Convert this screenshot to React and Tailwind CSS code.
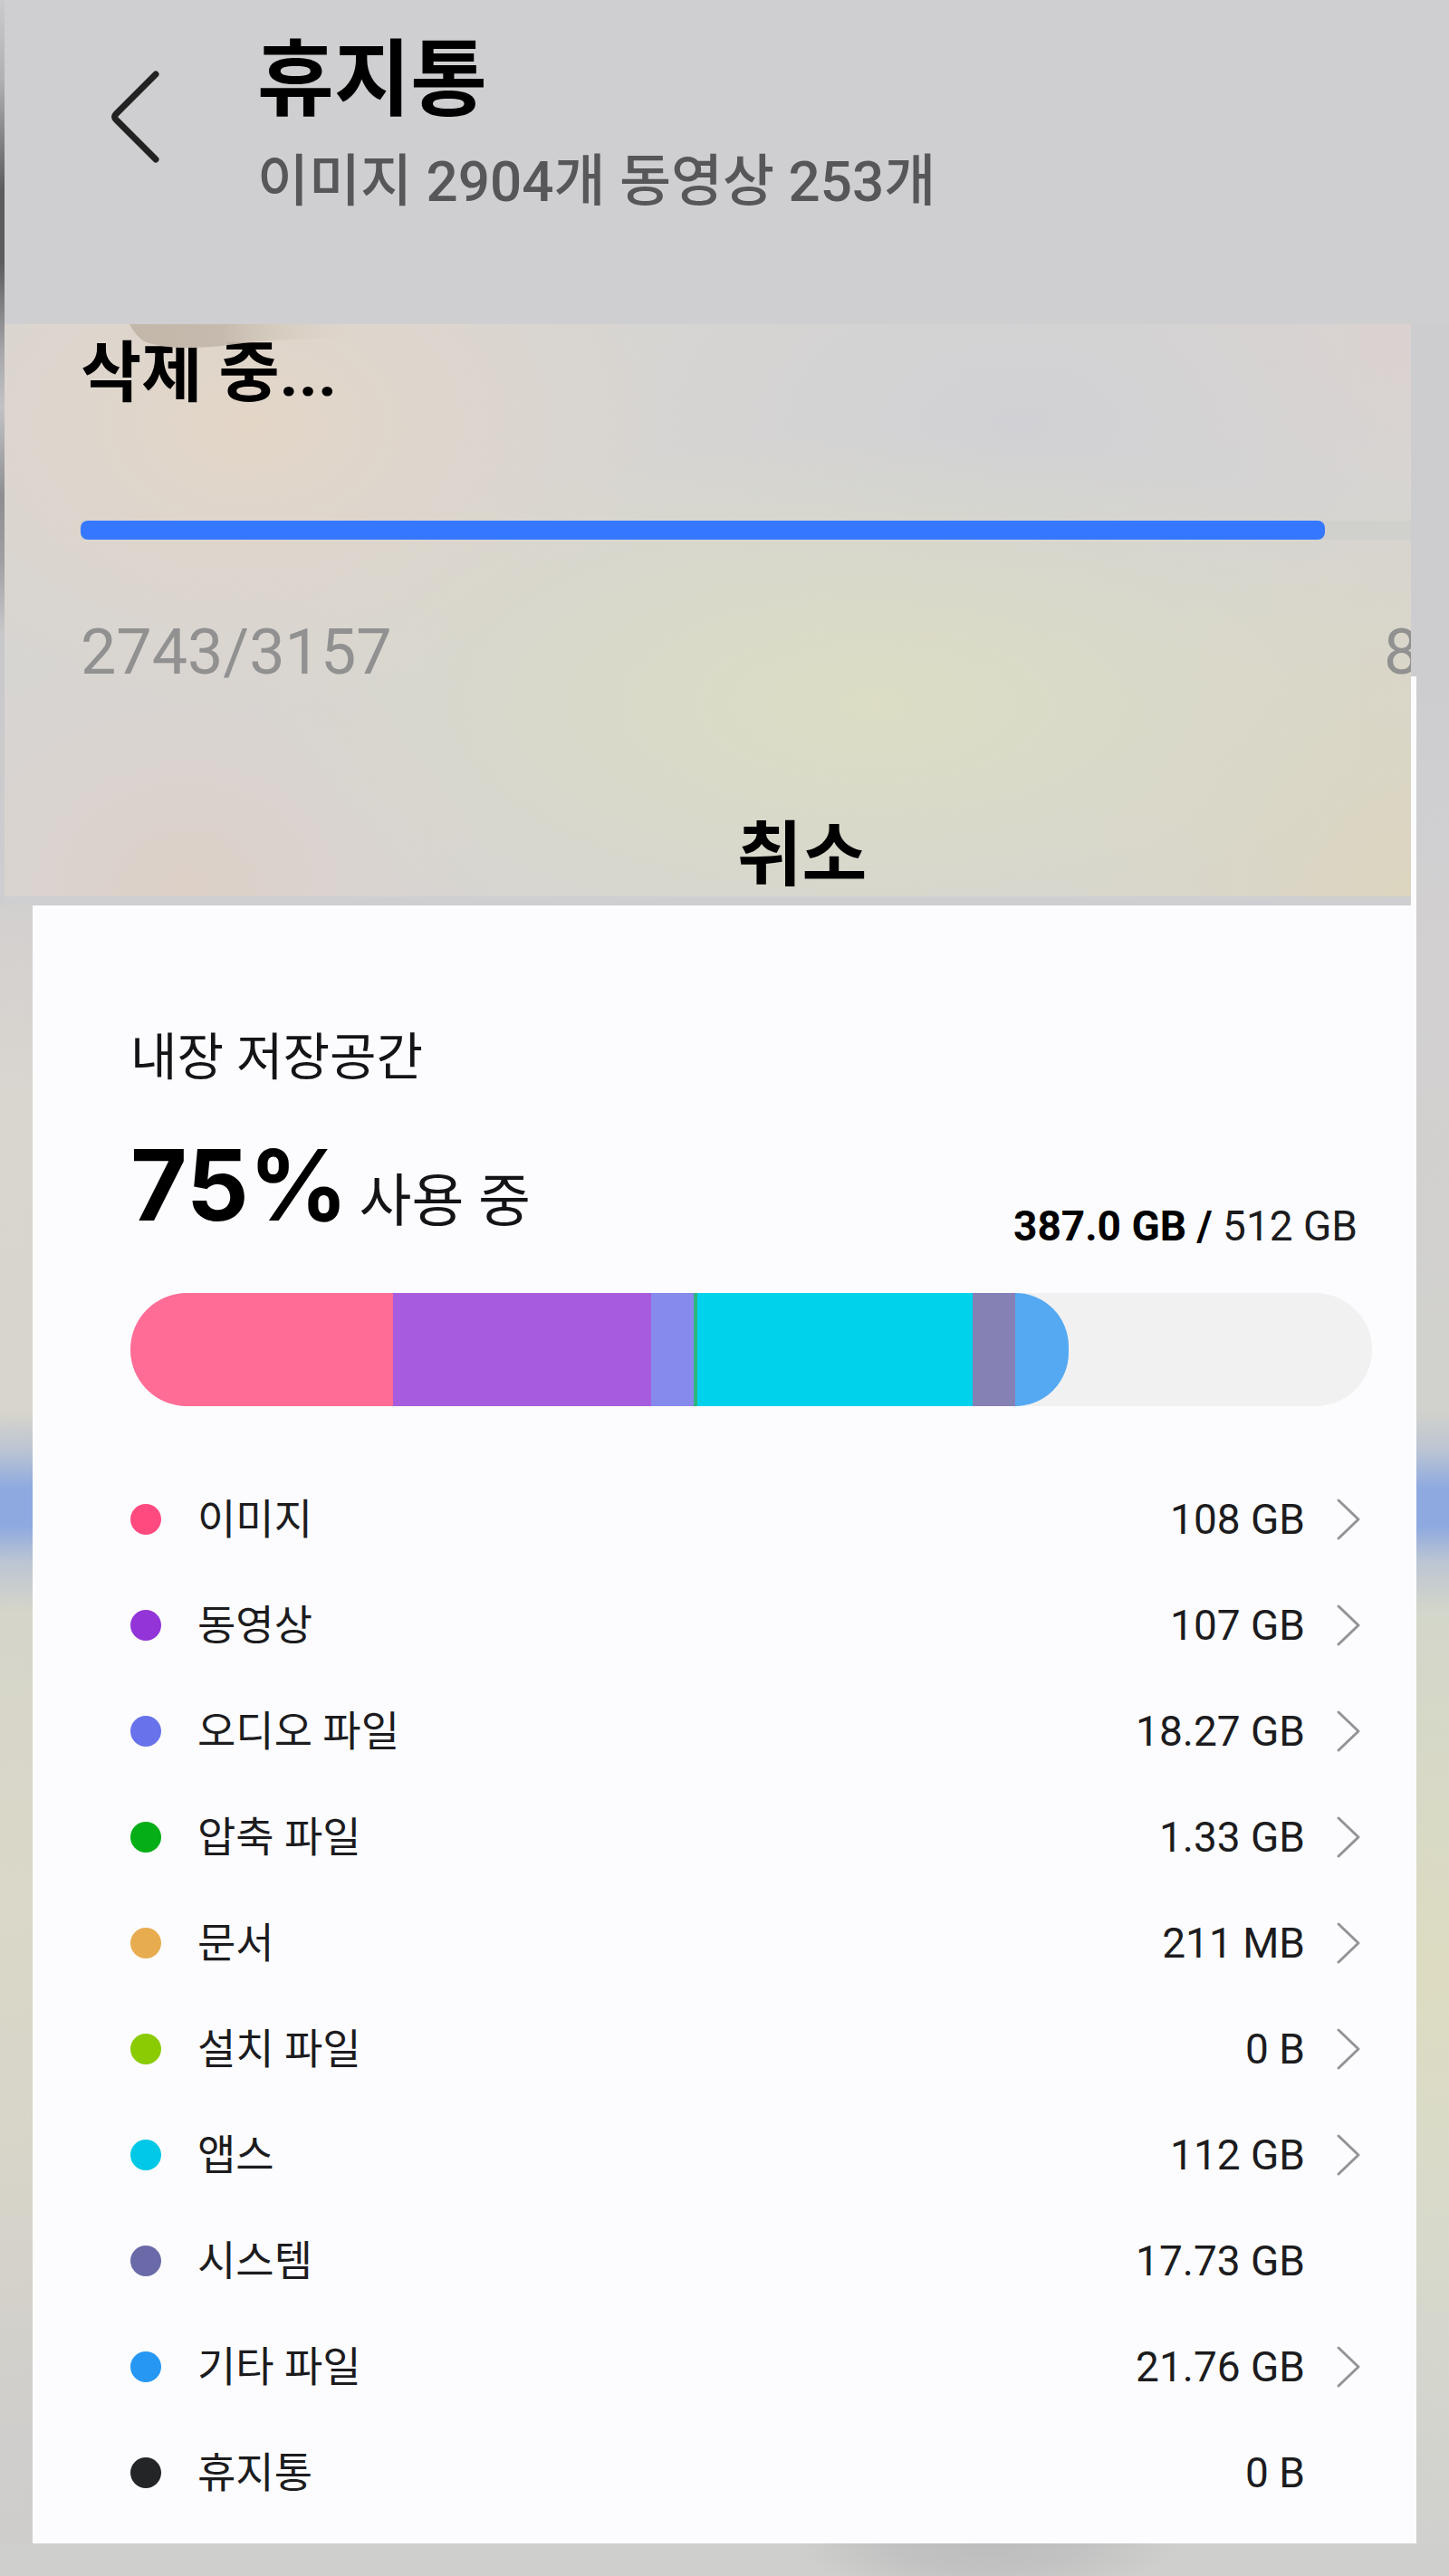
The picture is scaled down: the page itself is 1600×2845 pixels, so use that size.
import React from 'react';

const categories = [
  { name: '이미지', size: '108 GB', dot: 'bg-[#ff4a7f]', link: true },
  { name: '동영상', size: '107 GB', dot: 'bg-[#9234d8]', link: true },
  { name: '오디오 파일', size: '18.27 GB', dot: 'bg-[#6872ea]', link: true },
  { name: '압축 파일', size: '1.33 GB', dot: 'bg-[#05ae17]', link: true },
  { name: '문서', size: '211 MB', dot: 'bg-[#e8ac50]', link: true },
  { name: '설치 파일', size: '0 B', dot: 'bg-[#8acb04]', link: true },
  { name: '앱스', size: '112 GB', dot: 'bg-[#00c8e6]', link: true },
  { name: '시스템', size: '17.73 GB', dot: 'bg-[#6a6aa8]', link: false },
  { name: '기타 파일', size: '21.76 GB', dot: 'bg-[#2697f3]', link: true },
  { name: '휴지통', size: '0 B', dot: 'bg-[#242527]', link: false },
];

// share of the whole 512 GB track, in percent
const segments = [
  { id: 'images', share: 21.15, color: 'bg-[#ff6c96]' },
  { id: 'videos', share: 20.8, color: 'bg-[#a75cdf]' },
  { id: 'audio', share: 3.45, color: 'bg-[#868aed]' },
  { id: 'archives', share: 0.25, color: 'bg-[#2fb57e]' },
  { id: 'apps', share: 22.15, color: 'bg-[#00d2ec]' },
  { id: 'system', share: 3.45, color: 'bg-[#8581b5]' },
  { id: 'other', share: 4.3, color: 'bg-[#55a9f3]' },
];

const Header = () => (
  <header className="flex h-[358px] items-start bg-[#cfcfd1]">
    <button type="button" aria-label="뒤로" className="ml-[109px] mt-[73px] cursor-pointer">
      <svg className="h-28 w-[72px]" viewBox="0 0 72 112" fill="none" stroke="#222223" strokeWidth="7" strokeLinecap="round" strokeLinejoin="round">
        <path d="M58 9 L14 53 Q11 56 14 59 L58 103" />
      </svg>
    </button>
    <div className="ml-[98px] mt-[37px]">
      <h1 className="text-[92px] leading-[104px] font-bold text-black">휴지통</h1>
      <p className="mt-5 text-[62px] leading-[80px] font-medium text-[#57575a]">이미지 2904개 동영상 253개</p>
    </div>
  </header>
);

const DeleteDialog = () => (
  <section className="relative z-10 mr-[42px] border-b-10 border-[#cfcfd1]">
    <div className="relative h-[632px] overflow-hidden bg-[#d7d5d2] bg-[radial-gradient(ellipse_680px_300px_at_960px_420px,#dcddc4_0%,#dadbc6b0_45%,transparent_100%),radial-gradient(ellipse_460px_320px_at_270px_110px,#e3d6c7_0%,#e1d6cab0_40%,transparent_100%),radial-gradient(ellipse_340px_280px_at_200px_620px,#dcd0c7_0%,#dcd2cd99_50%,transparent_100%),radial-gradient(ellipse_440px_260px_at_1120px_110px,#d1d1d5_0%,transparent_100%),radial-gradient(ellipse_400px_460px_at_1553px_632px,#dcd5bf_0%,transparent_100%),radial-gradient(ellipse_300px_160px_at_1540px_30px,#dbd2d0_0%,transparent_100%)] pl-[84px]">
      <h2 className="pt-3 text-[73px] leading-[84px] font-bold text-black">삭제 중...</h2>
      <div className="mt-[121px] flex h-[21px] bg-[#d0d1cd]" role="progressbar" aria-label="삭제 중" aria-valuemin={0} aria-valuemax={3157} aria-valuenow={2743}>
        <div className="w-[93.5%] rounded-lg bg-[#3578ff]" />
      </div>
      <div className="mt-[82px] flex justify-between text-[70px] leading-[84px] text-[#919192]">
        <span>2743/3157</span>
        <span className="w-[30px] overflow-hidden">8</span>
      </div>
      <div className="mt-[134px] flex justify-center pl-[124px]">
        <button type="button" className="cursor-pointer text-[78px] leading-[100px] font-bold text-black">취소</button>
      </div>
      {/* edge of the card behind the sheet */}
      <svg className="absolute top-0 left-[130px] h-7 w-[260px]" viewBox="0 0 260 28" fill="none">
        <defs>
          <linearGradient id="shade" x1="0" x2="1" y1="0" y2="0">
            <stop offset="0" stopColor="#c2b7a9" />
            <stop offset="0.4" stopColor="#c5baad" />
            <stop offset="1" stopColor="#ddd2c4" stopOpacity="0" />
          </linearGradient>
        </defs>
        <path d="M8 0 H260 V12 Q230 17 190 17 Q160 17 110 24 Q50 30 24 19 Q14 12 8 0 Z" fill="url(#shade)" />
      </svg>
    </div>
  </section>
);

const UsageBar = () => (
  <div className="mt-9 flex h-[125px] w-full rounded-full bg-[#f1f1f1]">
    {segments.map((s) => (
      <div
        key={s.id}
        className={`${s.color} first:rounded-l-full last:rounded-r-full`}
        style={{ width: `${s.share}%` }}
      />
    ))}
  </div>
);

const CategoryRow = ({ item }) => (
  <li>
    <a href="#" className="flex h-[117px] items-center text-[46px] leading-[60px] text-[#1c1c1e]">
      <span className={`size-[34px] rounded-full ${item.dot}`} />
      <span className="ml-10 flex-1">{item.name}</span>
      <span>{item.size}</span>
      <span className="ml-[34px] flex w-10 justify-start">
        {item.link && (
          <svg className="h-12 w-[30px]" viewBox="0 0 30 48" fill="none" stroke="#949496" strokeWidth="3" strokeLinecap="round" strokeLinejoin="round">
            <path d="M3 3 L25 24 L3 45" />
          </svg>
        )}
      </span>
    </a>
  </li>
);

const StorageCard = () => (
  <main className="-mt-[253px] mr-9 ml-9 bg-[#fcfcfe] pt-[379px] pr-[49px] pb-5 pl-[108px]">
    <h2 className="text-[56px] leading-[84px] text-[#141416]">내장 저장공간</h2>
    <div className="mt-[34px] flex items-end justify-between pr-4">
      <p className="text-[63px] leading-[130px] text-[#141416]">
        <span className="mr-3 font-['Inter','Noto_Sans_CJK_KR',sans-serif] text-[108px] font-bold text-black">75%</span>
        사용 중
      </p>
      <p className="pb-2 text-[46px] leading-[60px] text-[#1c1c1e]">
        <span className="font-bold text-black">387.0 GB /</span> 512 GB
      </p>
    </div>
    <UsageBar />
    <ul className="mt-[66px]">
      {categories.map((item) => (
        <CategoryRow key={item.name} item={item} />
      ))}
    </ul>
  </main>
);

export default function App() {
  return (
    <div className="bg-[linear-gradient(to_bottom,#cdcdd0_0px,#cdcdd0_900px,#d3d0cf_1020px,#d9d6d0_1200px,#d7d5cc_1560px,#bcc5d2_1600px,#8da9e0_1645px,#8da9e0_1685px,#bcc5d2_1725px,#d6d5ca_1780px,#dad8c8_2100px,#d8d5c9_2350px,#d0cecc_2700px,#cecdcc_2845px)] font-['Roboto','Noto_Sans_CJK_KR',sans-serif]">
      <div className="bg-[linear-gradient(to_right,transparent_50%,#cdcdd0_50%),linear-gradient(to_bottom,#cbcbcd_0px,#b0b0b2_90px,#5c5c5e_210px,#5c5c5e_290px,#a8a8aa_390px,#c2c2c4_450px,#8e8e90_550px,#a0a0a2_620px,#c8c8ca_700px,#cecdd0_1000px)] pl-[5px]">
        <Header />
        <DeleteDialog />
      </div>
      <div className="bg-[linear-gradient(to_bottom,#cdcdd0_0px,#d2d0d1_300px,#d1d1cd_813px,#bcc5d2_853px,#8da9e0_898px,#8da9e0_938px,#bcc5d2_978px,#d3d6ca_1033px,#dddcc2_1433px,#d7d9cc_1753px,#d0d0ce_2062px)] bg-[size:50%_100%] bg-right bg-no-repeat">
        <StorageCard />
      </div>
      <div className="h-9 bg-[#cfcfcd] bg-[radial-gradient(ellipse_210px_60px_at_68%_0px,#bdbdbe_0%,#c2c2c2_50%,transparent_100%)]" />
    </div>
  );
}
